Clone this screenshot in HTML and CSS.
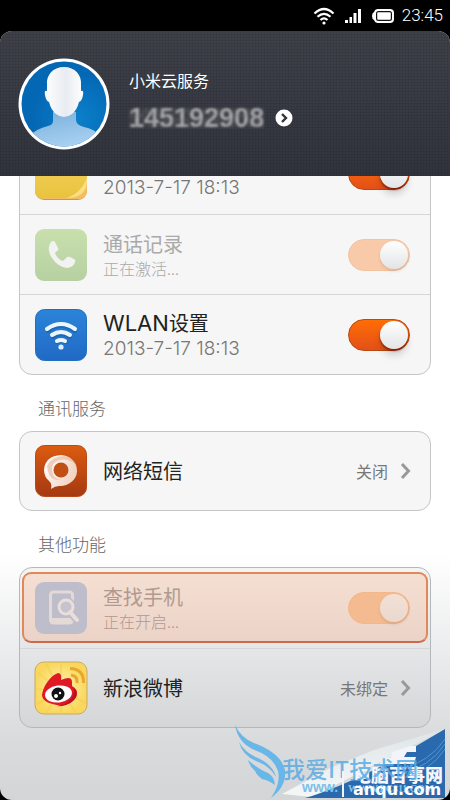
FILE: index.html
```html
<!DOCTYPE html>
<html lang="zh-CN">
<head>
<meta charset="utf-8">
<meta name="viewport" content="width=device-width, initial-scale=1">
<title>小米云服务</title>
<link rel="stylesheet" href="styles.css">
</head>
<body>
<div class="status">
  <svg class="status-wifi" viewBox="0 0 22 18" width="22" height="18" fill="none" stroke="#fff" stroke-width="2.200"><path d="M1.500 6.500Q11-2.500 20.500 6.500M4.500 9.800Q11 3.800 17.500 9.800M7.500 13Q11 9.800 14.500 13"/><circle cx="11" cy="16" r="1.600" fill="#fff" stroke="none"/></svg>
  <svg class="status-signal" viewBox="0 0 18 16" width="18" height="16" fill="#fff"><path d="M1 12h3v3H1zM5.500 9h2.500v6H5.500zM9.500 5h3v10h-3zM14 1h3v14h-3z"/></svg>
  <svg class="status-battery" viewBox="0 0 22 14" width="22" height="14"><path d="M6 0h12a4 4 0 0 1 4 4v6a4 4 0 0 1-4 4H6q-3 0-4-3-2-1-2-4t2-4q1-3 4-3z" fill="#fff"/><rect x="4" y="2" width="16" height="10" rx="2.500" fill="#111"/><rect x="5.200" y="3.200" width="13.600" height="7.600" rx="1" fill="#fff"/></svg>
  <span>23:45</span>
</div>
<div class="screen">
  <header class="account">
    <svg class="avatar" viewBox="0 0 92 92" width="92" height="92">
      <defs>
        <radialGradient id="sky" cx=".65" cy=".65"><stop offset="0" stop-color="#0b80ca"/><stop offset="1" stop-color="#0467b4"/></radialGradient>
        <linearGradient id="face" x2="1"><stop offset="0" stop-color="#fff"/><stop offset=".55" stop-color="#e8ebf1"/><stop offset="1" stop-color="#fff"/></linearGradient>
        <linearGradient id="body" x2=".4" y2="1"><stop offset="0" stop-color="#79aedb"/><stop offset="1" stop-color="#a9d2f2"/></linearGradient>
        <clipPath id="disc"><circle cx="46" cy="46" r="42.500"/></clipPath>
      </defs>
      <circle cx="46" cy="46" r="45.500" fill="#fff"/>
      <g clip-path="url(#disc)">
        <rect width="92" height="92" fill="url(#sky)"/>
        <path d="M35 54v9q0 4-5 5-12 3-19 10v14h72V78q-7-7-17-9-8-2-8-7v-8z" fill="url(#body)"/>
        <path d="M46 9c11 0 18 8 17 18v6q3-1 2 4-1 6-4 7-2 8-7 12-8 6-16 0-5-4-7-12-3-1-4-7-1-5 2-4v-6C28 17 35 9 46 9z" fill="url(#face)"/>
      </g>
    </svg>
    <div class="account-text">
      <h1>小米云服务</h1>
      <a class="account-link" href="#"><span class="account-id">145192908</span>
        <svg viewBox="0 0 18 18" width="18" height="18"><circle cx="9" cy="9" r="8.500" fill="#fff"/><path d="M7 5 11 9l-4 4" fill="none" stroke="#30333a" stroke-width="2.400"/></svg>
      </a>
    </div>
  </header>
  <main>
    <ul class="card card-first">
      <li class="row">
        <svg class="icon" viewBox="0 0 54 54"><defs><linearGradient id="note" x2="0" y2="1"><stop offset="0" stop-color="#f3d565"/><stop offset="1" stop-color="#e9c33e"/></linearGradient></defs><rect x="1" y="2" width="52" height="51" rx="9" fill="#cc9a39"/><rect x="1" y="1" width="52" height="51" rx="8" fill="#f4bd62"/><path d="M1 1h52v32q-2 17-20 18H9q-8 0-8-8z" fill="url(#note)"/><path d="M53 31q-6 15-20 20 18 0 20-15z" fill="#f8df81"/></svg>
        <label class="text" for="notes"><span class="title">便签</span><span class="sub date">2013-7-17 18:13</span></label>
        <input class="switch" id="notes" type="checkbox" checked>
      </li>
      <li class="row">
        <svg class="icon" viewBox="0 0 54 54"><defs><linearGradient id="green" x2="0" y2="1"><stop offset="0" stop-color="#c8e0ad"/><stop offset="1" stop-color="#b7d0a1"/></linearGradient></defs><rect x="1" y="1" width="52" height="52" rx="9" fill="url(#green)"/><path d="M17 14q2-2 4 0l3 6q1 2-1 3l-2 2q2 6 8 8l3-3q2-2 4-1l4 2q2 1 1 3-1 5-8 6-9-1-15-10-6-9-1-16z" fill="#f1f2f1"/></svg>
        <label class="text faded" for="calls"><span class="title">通话记录</span><span class="sub">正在激活...</span></label>
        <input class="switch pending" id="calls" type="checkbox" checked>
      </li>
      <li class="row">
        <svg class="icon" viewBox="0 0 54 54"><defs><linearGradient id="blue" x2="0" y2="1"><stop offset="0" stop-color="#2b84d9"/><stop offset="1" stop-color="#2069c4"/></linearGradient></defs><rect x="1.500" y="1.500" width="51" height="51" rx="9" fill="url(#blue)" stroke="#2070c0"/><g fill="none" stroke="#1557a6" stroke-opacity=".5" stroke-width="4" stroke-linecap="round"><path d="M14 23q13-10 27 0M19 29q8-6 17 0M23 34q4-3 9 0"/></g><g fill="none" stroke="#eaf5fc" stroke-width="4" stroke-linecap="round"><path d="M13 21q14-10 28 0M18 27q9-6 18 0M23 33q4-2 8 0"/></g><circle cx="27" cy="39" r="2.600" fill="#dceefa"/></svg>
        <label class="text" for="wlan"><span class="title"><span class="latin">WLAN</span>设置</span><span class="sub date">2013-7-17 18:13</span></label>
        <input class="switch" id="wlan" type="checkbox" checked>
      </li>
    </ul>
    <h2>通讯服务</h2>
    <ul class="card">
      <li><a class="row" href="#">
        <svg class="icon" viewBox="0 0 54 54"><defs><linearGradient id="rust" x2="0" y2="1"><stop offset="0" stop-color="#dc5b10"/><stop offset="1" stop-color="#a43912"/></linearGradient><linearGradient id="bubble" x2="1" y2=".4"><stop offset="0" stop-color="#fff"/><stop offset="1" stop-color="#f3d3c2"/></linearGradient></defs><rect x="1.500" y="1.500" width="51" height="51" rx="9" fill="url(#rust)" stroke="#b8491a"/><path d="M27 11a17 15.500 0 1 1-2 31q-4 0-8 3 1-5-1-7-6-5-6-12 1-14 17-15z" fill="url(#bubble)"/><path d="M13 22q5-10 17-10 9 2 11 8-7-6-15-4-9 2-8 11 1 8 9 9-11 1-13-9z" fill="#e6b49c" opacity=".6"/><circle cx="27" cy="26" r="7.500" fill="#c14e14"/></svg>
        <span class="text"><span class="title">网络短信</span></span>
        <span class="value">关闭</span>
        <svg class="chevron" viewBox="0 0 12 18"><path d="m2 2 6.500 7L2 16" fill="none" stroke="currentColor" stroke-width="3"/></svg>
      </a></li>
    </ul>
    <h2>其他功能</h2>
    <ul class="card card-shaded">
      <li class="row highlighted">
        <svg class="icon" viewBox="0 0 54 54"><rect x="1" y="1" width="52" height="52" rx="9" fill="#bdbdcb"/><rect x="16.500" y="11" width="22" height="31" rx="3" fill="none" stroke="#e4d9d5" stroke-width="3"/><path d="M16 37h22v4q-10 4-22 1z" fill="#e4d9d5"/><path d="m37 31 6 7" stroke="#bdbdcb" stroke-width="9"/><circle cx="32" cy="26" r="10" fill="#bdbdcb"/><circle cx="32" cy="26" r="7" fill="#c5c3cd" stroke="#e9deda" stroke-width="3"/><path d="m36 31 7 8" stroke="#e9deda" stroke-width="4" stroke-linecap="round"/></svg>
        <label class="text faded" for="find"><span class="title">查找手机</span><span class="sub">正在开启...</span></label>
        <input class="switch pending" id="find" type="checkbox" checked>
      </li>
      <li><a class="row" href="#">
        <svg class="icon" viewBox="0 0 54 54"><defs><radialGradient id="sun"><stop offset="0" stop-color="#fff6b5"/><stop offset="1" stop-color="#f8d75c"/></radialGradient></defs><rect x="1" y="1" width="52" height="52" rx="9" fill="url(#sun)" stroke="#c9a964"/><path d="M27 30 4 12M27 30 12 3M27 30 27 2M27 30 42 52M27 30 52 42M27 30 12 52M27 30 3 43M27 30 27 52M27 30 2 28" stroke="#f5ce4c" stroke-width="2" opacity=".5"/><path d="M8 34C9 25 17 14 24 12q4 0 3 7 11-5 11 2v4q6 3 5 9c-2 8-13 11-20 10S8 40 8 34z" fill="#e01a25"/><path d="M40 27q5 6 0 12-7 7-17 6 18-3 17-18z" fill="#b7121d"/><ellipse cx="24.500" cy="33" rx="13.500" ry="8.500" fill="#fff" transform="rotate(-7 24.500 33)"/><circle cx="24" cy="33" r="6.500" fill="#111"/><circle cx="22" cy="35" r="2" fill="#fff"/><circle cx="26" cy="32" r="1.200" fill="#fff"/><g fill="none" stroke="#e9a72b" stroke-width="3"><path d="M36 7.500Q50 8 49.500 22M37 14q7 1 6 8"/></g></svg>
        <span class="text"><span class="title">新浪微博</span></span>
        <span class="value">未绑定</span>
        <svg class="chevron" viewBox="0 0 12 18"><path d="m2 2 6.500 7L2 16" fill="none" stroke="currentColor" stroke-width="3"/></svg>
      </a></li>
    </ul>
  </main>
  <svg class="watermark" viewBox="0 0 216 78" width="216" height="78">
    <defs><linearGradient id="fold" x2="0" y2="1"><stop offset="0" stop-color="#dfe5e7"/><stop offset="1" stop-color="#f4f7f7"/></linearGradient></defs>
    <path d="M211 7 140 28 96 46 48 72l30 3z" fill="url(#fold)"/>
    <path d="M211 7v69H71Q100 68 150 43z" fill="#2a69ae"/>
    <g fill="none" stroke="#4d96d2"><path d="M211 22q-15 23-45 30M211 17q-15 23-45 30M211 27q-15 23-45 30"/></g>
    <path d="m158 30 18-6h6v6h-9l-3 5h12l-2 7h-34l3-6h8z" fill="#f2f4fa"/>
    <text class="wm-brand" x="119" y="60">电脑百事网</text>
    <text class="wm-small" x="114" y="70">WWW.PC811.COM</text>
    <text class="wm-domain" x="119" y="73">anqu.com</text>
    <text class="wm-host" x="68" y="70">www.</text>
    <text class="wm-site" x="48" y="56">我爱IT技术网</text>
    <path d="M109 49v26" stroke="#eef4fa" stroke-width="2"/>
    <path d="M1 3q6 13 19 18 27 10 31 27 2 16-14 28 10-15 7-27Q39 35 23 29 4 22 1 3zM5 20q6 11 19 16 15 7 18 19Q36 44 22 39 8 33 5 20zM14 38q10 9 20 13 6 3 7 12-7-5-13-6l3 2q-8-5-10-10-5-4-7-11z" fill="#69b7e8"/>
  </svg>
</div>
</body>
</html>
```

FILE: styles.css
```css
* { box-sizing: border-box; }

body {
  margin: 0;
  min-height: 100vh;
  display: flex;
  flex-direction: column;
  background: #000;
  color: #222;
  font-family: "Noto Sans CJK SC", sans-serif;
}

h1, h2, ul { margin: 0; padding: 0; font-weight: 400; }
ul { list-style: none; }
a { color: inherit; text-decoration: none; }

.status {
  display: flex;
  align-items: center;
  justify-content: flex-end;
  height: 31px;
  padding-right: 7px;
  color: #fff;
  font: 300 17px/31px Roboto, sans-serif;
}
.status-signal { margin-left: 9px; }
.status-battery { margin: 0 8px 0 10px; }

.screen {
  position: relative;
  flex: 1;
  overflow: hidden;
  border-radius: 12px;
  background: linear-gradient(#fff 68%, #d9dbdd 92%, #d3d5d7);
}

.account {
  position: relative;
  z-index: 1;
  display: flex;
  align-items: center;
  gap: 19px;
  height: 145px;
  padding: 0 18px;
  color: #fff;
  background:
    repeating-linear-gradient(90deg, #0001 0 1px, #0000 1px 3px),
    repeating-linear-gradient(#0001 0 1px, #0000 1px 3px),
    linear-gradient(#3e4148, #31343d);
}
.account-text { padding-bottom: 8px; }
.account h1 { font-size: 16px; line-height: 24px; }
.account-link { display: flex; align-items: center; gap: 11px; margin-top: 12px; }
.account-id {
  position: relative;
  font: 700 27px/28px "Liberation Sans", sans-serif;
  color: #a6a8ab;
  filter: blur(1px);
}
.account-id::after {
  content: "";
  position: absolute;
  inset: 4px 0;
  background: repeating-conic-gradient(#9993 0 25%, #6663 0 50%) 0 0 / 10px 10px;
}

.card {
  margin: 0 19px;
  border: 1px solid #c3c5c6;
  border-radius: 13px;
  background: #f6f6f6;
}
.card-first { margin-top: -43px; }
.card-shaded { background: linear-gradient(#f4f4f4, #e5e6e7 50%, #d4d6d8); border-color: #b5b8bb; }
.card li + li { border-top: 1px solid #d5d6d7; }

.row {
  position: relative;
  display: flex;
  align-items: center;
  height: 80px;
  padding: 0 18px 0 14px;
}
.card a.row { height: 78px; }
.icon { width: 54px; height: 54px; flex: none; }
.text { flex: 1; display: flex; flex-direction: column; margin-left: 15px; }
.title { font-size: 20px; line-height: 26px; }
.latin { font: 400 22px/26px Inter, sans-serif; }
.sub { color: #777; font-size: 16px; font-weight: 300; line-height: 22px; }
.date { padding-top: 2px; font-family: Inter, sans-serif; font-size: 19px; }
.faded .title, .faded .sub { color: #aaa; }

h2 {
  padding: 22px 38px 12px;
  color: #666;
  font-size: 17px;
  font-weight: 300;
  line-height: 22px;
}

.value { color: #777; font-size: 16px; }
.chevron { width: 12px; height: 18px; margin-left: 12px; color: #999; }

.switch {
  appearance: none;
  display: flex;
  justify-content: flex-end;
  width: 62px;
  height: 32px;
  margin: 0 2px 0 0;
  padding: 1px;
  border: 1px solid #b84a12;
  border-radius: 16px;
  background: linear-gradient(#ff6d05, #e2501a);
}
.switch::before {
  content: "";
  width: 28px;
  height: 28px;
  border-radius: 50%;
  background: linear-gradient(#fff, #e3e4e6);
  box-shadow: 0 2px 2px #6009, 0 7px 7px #0002;
}
.switch.pending { border-color: #f2c39f; background: #f8caaa; }
.switch.pending::before { box-shadow: 0 2px 3px #a865; }

.highlighted::before {
  content: "";
  position: absolute;
  inset: 4px 2px 5px;
  border: 2px solid #df8858;
  border-bottom-color: #cb6b4c;
  border-radius: 9px;
  background: linear-gradient(#f5dfd2, #ebd3c7);
}
.highlighted > * { position: relative; }
.highlighted .title, .highlighted .sub { color: #b09a90; }
.highlighted .switch { border-color: #f2b78b; background: #f4bb90; }
.highlighted .switch::before { background: linear-gradient(#f3e0d5, #ead8cf); }

.watermark { position: absolute; right: 0; bottom: 0; }
.wm-site { font: 500 23px "Noto Sans CJK SC", sans-serif; fill: #59abe4; fill-opacity: .85; }
.wm-brand { font: 900 18px "Noto Sans CJK SC", sans-serif; fill: #f5f6fb; }
.wm-domain { font: 700 16px "DejaVu Sans", sans-serif; fill: #fff; }
.wm-host { font: 700 14px "Liberation Sans", sans-serif; fill: #7cbfe9; }
.wm-small { font: 700 10px "Liberation Serif", serif; fill: #8ac2e8; }
```
